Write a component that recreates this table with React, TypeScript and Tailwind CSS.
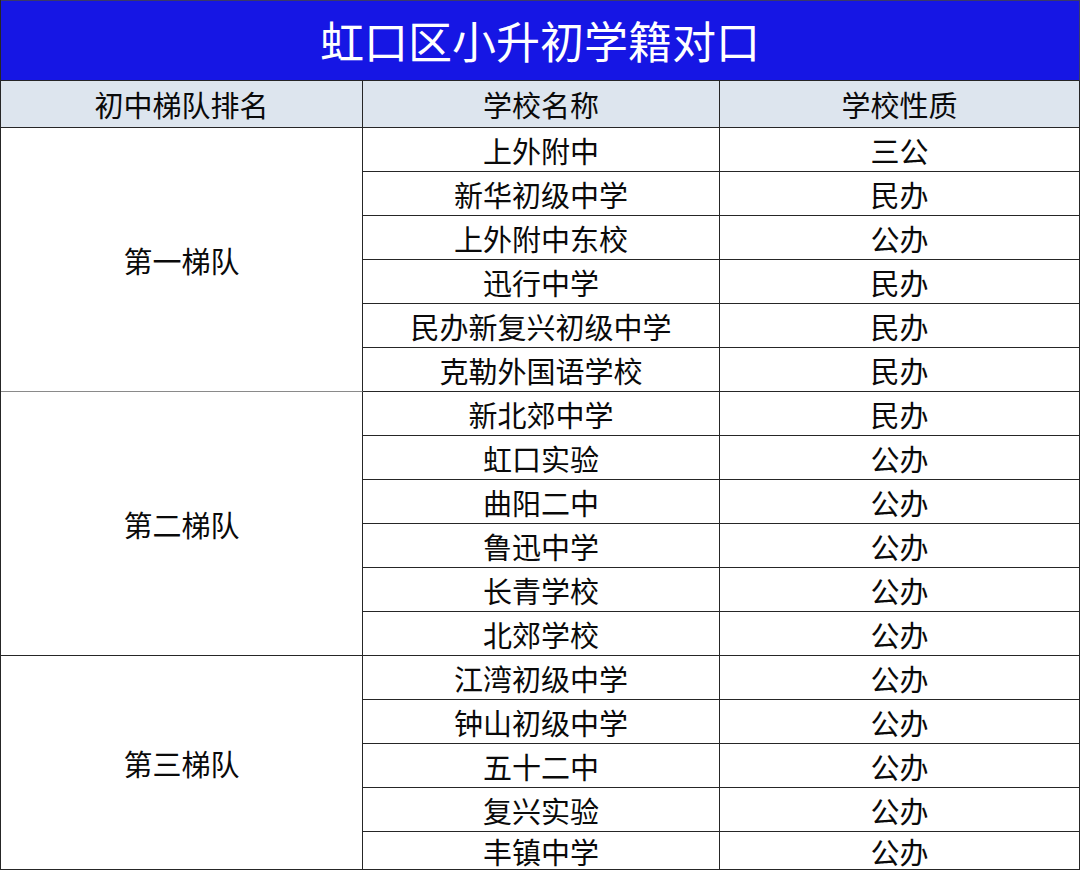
import React from "react";

const groups: { name: string; rows: [string, string][] }[] = [
  {
    name: "第一梯队",
    rows: [
      ["上外附中", "三公"],
      ["新华初级中学", "民办"],
      ["上外附中东校", "公办"],
      ["迅行中学", "民办"],
      ["民办新复兴初级中学", "民办"],
      ["克勒外国语学校", "民办"],
    ],
  },
  {
    name: "第二梯队",
    rows: [
      ["新北郊中学", "民办"],
      ["虹口实验", "公办"],
      ["曲阳二中", "公办"],
      ["鲁迅中学", "公办"],
      ["长青学校", "公办"],
      ["北郊学校", "公办"],
    ],
  },
  {
    name: "第三梯队",
    rows: [
      ["江湾初级中学", "公办"],
      ["钟山初级中学", "公办"],
      ["五十二中", "公办"],
      ["复兴实验", "公办"],
      ["丰镇中学", "公办"],
    ],
  },
];

const spanClass = ["row-span-6", "row-span-6", "row-span-5"];

export default function App() {
  const cell =
    "flex items-center justify-center border-b border-r border-[#262626] leading-none pt-[8px]";
  const head =
    "flex items-center justify-center border-b border-r border-[#262626] leading-none pt-[6px] bg-[#dde5ee]";
  return (
    <div
      className="w-[1080px] h-[870px] overflow-hidden bg-white border-l border-[#262626] text-[#0a0a0a]"
      style={{ fontFamily: '"Liberation Serif", "Noto Sans CJK SC", serif' }}
    >
      <div className="h-[81px] bg-[#1616e4] border-t border-r border-b border-t-[#3a3a6a] border-r-[#3a3a6a] border-b-[#262626] flex items-center justify-center text-white text-[44px] leading-none pt-[8px]">
        虹口区小升初学籍对口
      </div>
      <div className="grid grid-cols-[362px_357px_1fr] grid-rows-[47px_repeat(16,44px)_38px] text-[29px]">
        <div className={head}>初中梯队排名</div>
        <div className={head}>学校名称</div>
        <div className={head}>学校性质</div>
        {groups.map((g, gi) => (
          <React.Fragment key={g.name}>
            <div
              className={`${cell} ${spanClass[gi]} col-start-1 ${
                gi === 0 ? "border-b-[#8a8a8a]" : ""
              }`}
            >
              {g.name}
            </div>
            {g.rows.map(([school, kind]) => (
              <React.Fragment key={school}>
                <div className={`${cell} col-start-2`}>{school}</div>
                <div className={`${cell} col-start-3`}>{kind}</div>
              </React.Fragment>
            ))}
          </React.Fragment>
        ))}
      </div>
    </div>
  );
}
